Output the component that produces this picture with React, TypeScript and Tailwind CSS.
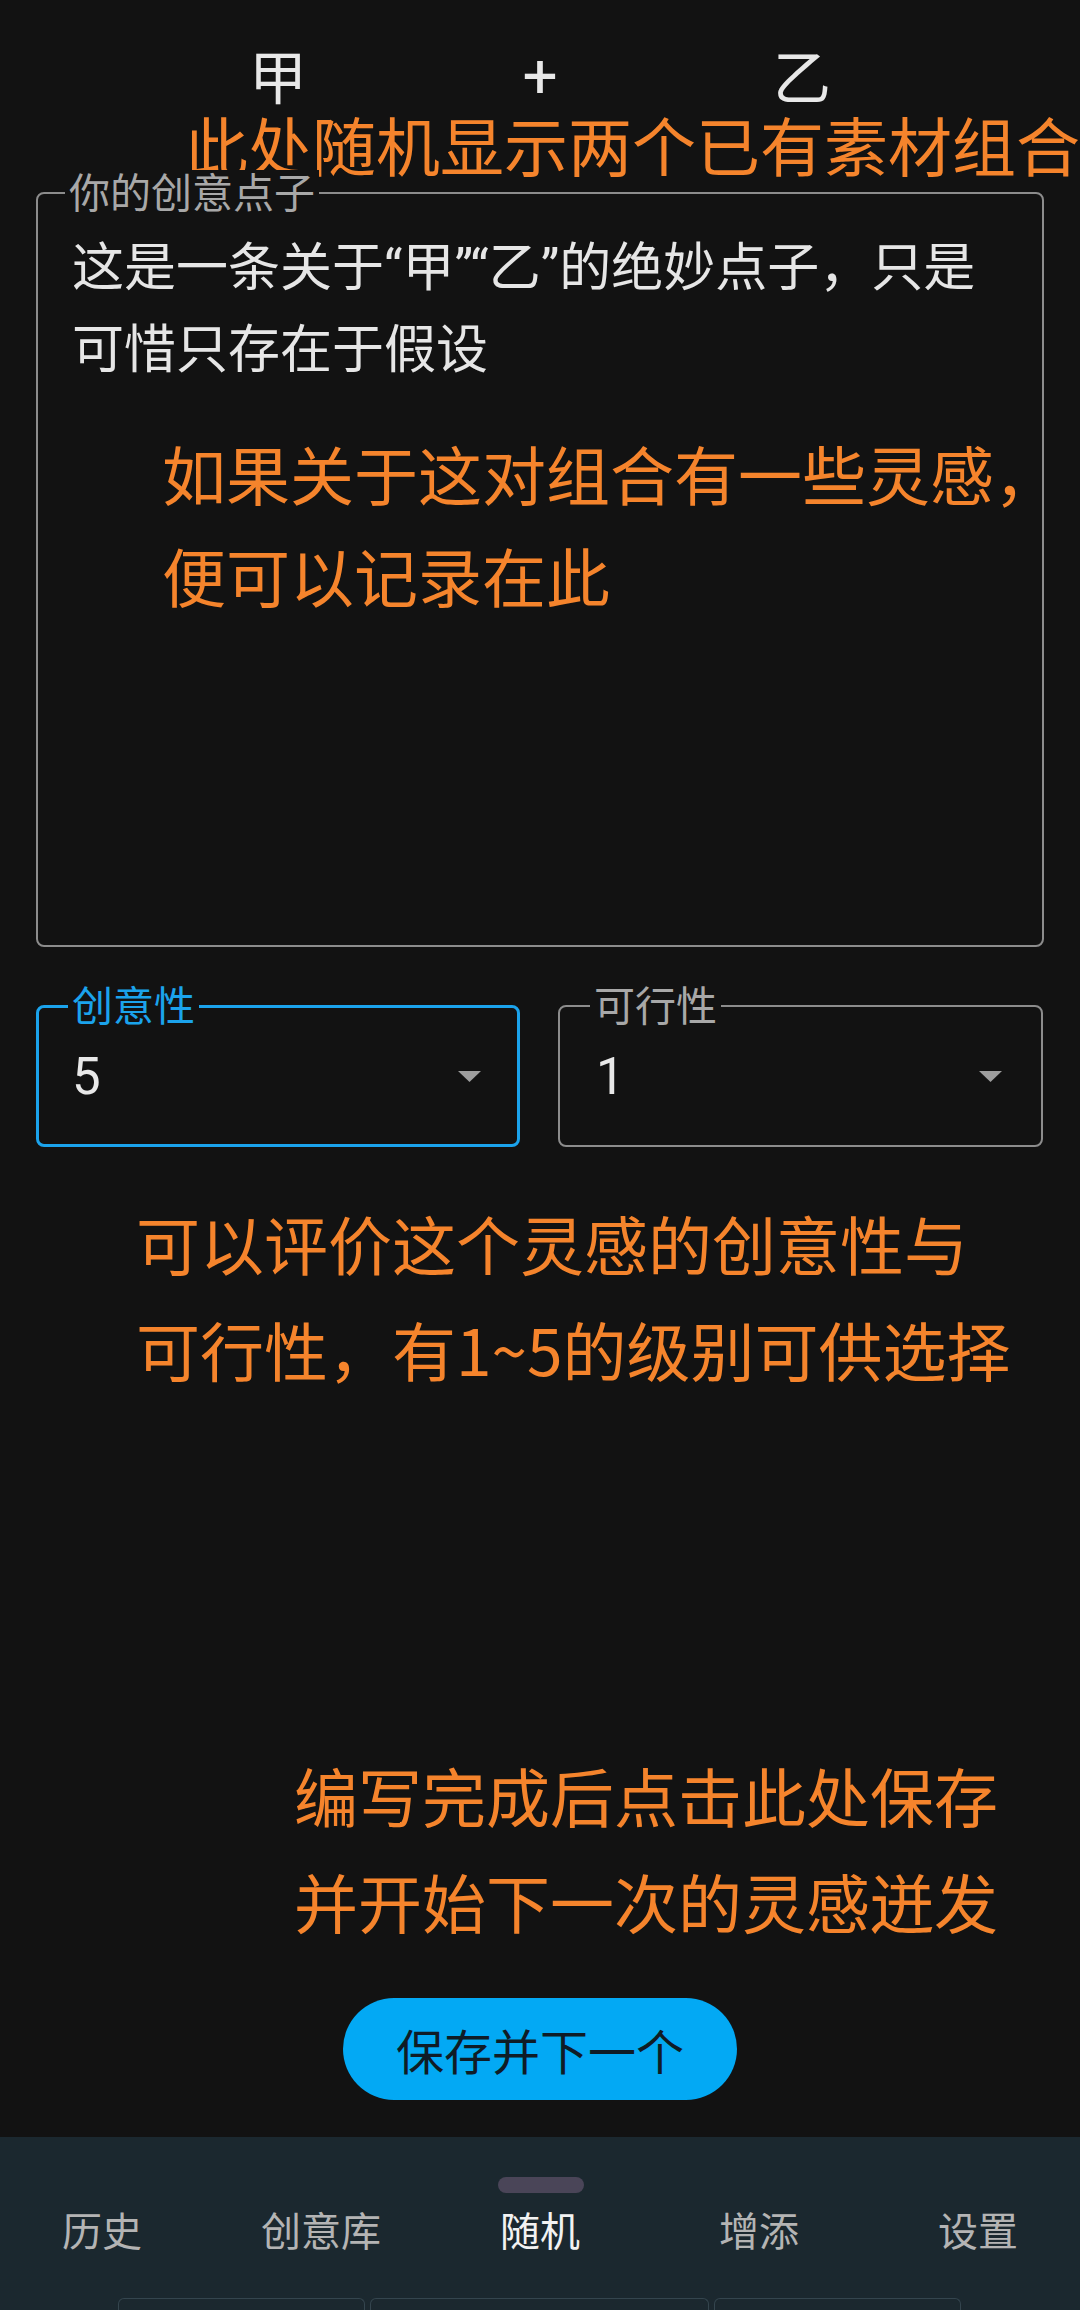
import React from "react";

const cjk = { fontFamily: '"Noto Sans CJK SC", "Noto Sans", sans-serif' };
const latin = { fontFamily: 'Roboto, "Noto Sans", sans-serif' };

function Arrow() {
  return (
    <svg width="23" height="11" viewBox="0 0 23 11" className="shrink-0">
      <polygon points="0,0 23,0 11.5,11" fill="#9e9e9e" />
    </svg>
  );
}

export default function App() {
  return (
    <div
      className="w-[1080px] h-[2310px] bg-[#121212] flex flex-col overflow-hidden"
      style={cjk}
    >
      {/* Top pair */}
      <div className="mt-[45px] flex justify-center text-[58px] leading-none text-[#e8e8e8]">
        <div className="w-[262px] text-center">甲</div>
        <div className="w-[262px] text-center text-[62px]" style={latin}>+</div>
        <div className="w-[262px] text-center">乙</div>
      </div>

      {/* annotation 1 */}
      <div className="mt-[4px] ml-[184px] text-[64px] leading-none text-[#f5842c] whitespace-nowrap">
        此处随机显示两个已有素材组合
      </div>

      {/* Idea text field */}
      <div className="relative mt-[17px] mx-[36px] h-[755px] border-2 border-[#8c8c8c] rounded-[8px] pl-[34px] pt-[31px]">
        <div className="absolute top-[-24px] left-[27px] px-[4px] bg-[#121212] text-[41px] leading-none text-[#a8a8a8]">
          你的创意点子
        </div>
        <div className="text-[52px] leading-[77px] text-[#e6e6e6] whitespace-nowrap">
          <div>
            这是一条关于<span style={latin}>“</span>甲<span style={latin}>”“</span>乙<span style={latin}>”</span>的绝妙点子，只是
          </div>
          <div>可惜只存在于假设</div>
        </div>
        <div className="mt-[37px] ml-[90px] text-[64px] leading-[102px] text-[#f5842c] whitespace-nowrap">
          <div>如果关于这对组合有一些灵感，</div>
          <div>便可以记录在此</div>
        </div>
      </div>

      {/* Selects */}
      <div className="mt-[58px] mx-[36px] flex gap-[38px]">
        <div className="relative w-[484px] h-[142px] border-[3px] border-[#1ba3ec] rounded-[8px] flex items-center justify-between pl-[33px] pr-[36px]">
          <div className="absolute top-[-25px] left-[29px] px-[4px] bg-[#121212] text-[41px] leading-none text-[#1ba3ec]">
            创意性
          </div>
          <span className="text-[51px] leading-none text-[#e8e8e8]" style={latin}>
            5
          </span>
          <Arrow />
        </div>
        <div className="relative w-[485px] h-[142px] border-2 border-[#8c8c8c] rounded-[8px] flex items-center justify-between pl-[36px] pr-[39px]">
          <div className="absolute top-[-24px] left-[30px] px-[4px] bg-[#121212] text-[41px] leading-none text-[#a8a8a8]">
            可行性
          </div>
          <span className="text-[51px] leading-none text-[#e8e8e8]" style={latin}>
            1
          </span>
          <Arrow />
        </div>
      </div>

      {/* annotation 2 */}
      <div className="mt-[42px] ml-[136px] text-[64px] leading-[106px] text-[#f5842c] whitespace-nowrap">
        <div>可以评价这个灵感的创意性与</div>
        <div>可行性，有1~5的级别可供选择</div>
      </div>

      {/* annotation 3 */}
      <div className="mt-[340px] ml-[294px] text-[64px] leading-[106px] text-[#f5842c] whitespace-nowrap">
        <div>编写完成后点击此处保存</div>
        <div>并开始下一次的灵感迸发</div>
      </div>

      {/* Button */}
      <div className="mt-[45px] flex justify-center">
        <button className="w-[394px] h-[102px] rounded-full bg-[#03a9f4] text-[48px] leading-none text-[#0f1c26] flex items-center justify-center">
          保存并下一个
        </button>
      </div>

      {/* Bottom nav */}
      <div className="mt-auto h-[173px] bg-[#1b282f] flex flex-col items-center">
        <div className="mt-[40px] w-[86px] h-[16px] rounded-full bg-[#4a4558] translate-x-[1px]" />
        <div className="mt-[16px] grid grid-cols-[repeat(5,219px)] justify-center w-[1080px] text-[40px] leading-none">
          <div className="text-center text-[#b4b4b4]">历史</div>
          <div className="text-center text-[#b4b4b4]">创意库</div>
          <div className="text-center text-[#f2f2f2]">随机</div>
          <div className="text-center text-[#b4b4b4]">增添</div>
          <div className="text-center text-[#b4b4b4]">设置</div>
        </div>
        <div className="mt-auto flex w-[1080px] pl-[118px] gap-[5px]">
          <div className="w-[247px] h-[12px] rounded-t-[6px] border border-b-0 border-[#34454e]" />
          <div className="w-[339px] h-[12px] rounded-t-[6px] border border-b-0 border-[#34454e]" />
          <div className="w-[247px] h-[12px] rounded-t-[6px] border border-b-0 border-[#34454e]" />
        </div>
      </div>
    </div>
  );
}
